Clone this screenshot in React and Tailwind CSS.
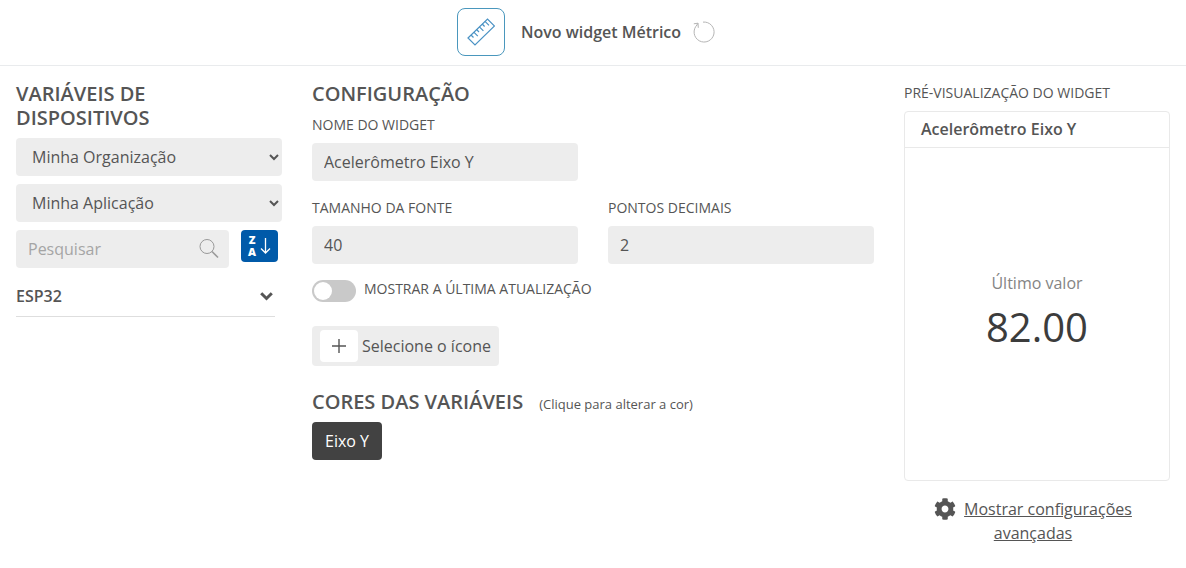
import { FaCog } from 'react-icons/fa';

const organizations = ['Minha Organização'];
const applications = ['Minha Aplicação'];
const devices = ['ESP32'];
const variables = [{ name: 'Eixo Y', color: '#424242' }];

export default function App() {
  return (
    <div className="min-h-screen bg-white font-['Open_Sans',sans-serif] text-base text-[#555555]">
      <WidgetHeader />
      <main className="grid grid-cols-4 gap-x-[30px] px-4 py-4">
        <DeviceVariables />
        <Configuration />
        <Preview />
      </main>
    </div>
  );
}

function WidgetHeader() {
  return (
    <header className="flex items-center justify-center gap-4 border-b border-[#e9ebed] pt-2 pr-[14px] pb-[9px]">
      <span className="flex size-12 items-center justify-center rounded-lg border border-[#4a97bd]">
        <RulerIcon />
      </span>
      <div className="flex items-center gap-3">
        <h1 className="font-semibold">Novo widget Métrico</h1>
        <button type="button" aria-label="Redefinir">
          <ResetIcon />
        </button>
      </div>
    </header>
  );
}

function SectionTitle({ children }) {
  return <h2 className="text-xl leading-6 font-semibold uppercase">{children}</h2>;
}

function DeviceVariables() {
  return (
    <section>
      <SectionTitle>
        Variáveis de
        <br />
        dispositivos
      </SectionTitle>
      <div className="mt-2 flex flex-col gap-2">
        <SelectBox label="Organização" options={organizations} />
        <SelectBox label="Aplicação" options={applications} />
        <div className="flex items-start gap-3 pr-1">
          <div className="relative min-w-0 flex-1">
            <input
              type="search"
              aria-label="Pesquisar"
              placeholder="Pesquisar"
              className="h-[38px] w-full rounded bg-[#ededed] pr-10 pl-3 placeholder:text-[#a5a5a5]"
            />
            <SearchIcon />
          </div>
          <button
            type="button"
            aria-label="Ordenar"
            className="flex h-8 w-[37px] items-center justify-center rounded bg-[#005aa9] text-white"
          >
            <SortIcon />
          </button>
        </div>
      </div>
      <ul className="mt-4 pr-[7px]">
        {devices.map((device) => (
          <li key={device} className="border-b border-[#dedede] pb-2">
            <button type="button" className="flex w-full items-center justify-between font-semibold">
              {device}
              <ChevronIcon />
            </button>
          </li>
        ))}
      </ul>
    </section>
  );
}

function SelectBox({ label, options }) {
  return (
    <select aria-label={label} className="h-[38px] w-full rounded bg-[#ededed] px-3">
      {options.map((option) => (
        <option key={option}>{option}</option>
      ))}
    </select>
  );
}

function TextField({ id, label, value }) {
  return (
    <div>
      <label htmlFor={id} className="block text-sm uppercase">
        {label}
      </label>
      <input id={id} defaultValue={value} className="mt-2 block h-[38px] w-full rounded bg-[#ededed] px-3" />
    </div>
  );
}

function Configuration() {
  return (
    <section className="col-span-2">
      <SectionTitle>Configuração</SectionTitle>
      <div className="mt-[9px] grid grid-cols-2 gap-x-[30px] gap-y-[17px]">
        <div className="col-span-2 grid grid-cols-2 gap-x-[30px]">
          <TextField id="name" label="Nome do widget" value="Acelerômetro Eixo Y" />
        </div>
        <TextField id="font-size" label="Tamanho da fonte" value="40" />
        <TextField id="decimals" label="Pontos decimais" value="2" />
      </div>
      <label className="mt-4 flex items-start gap-2 text-sm leading-[18px] uppercase">
        <input
          type="checkbox"
          className="h-[22px] w-11 appearance-none rounded-full bg-[#c9c9c9] p-[2px] before:block before:size-[18px] before:rounded-full before:bg-white checked:bg-[#005aa9] checked:before:ml-[22px]"
        />
        Mostrar a última atualização
      </label>
      <button type="button" className="mt-6 flex h-10 items-center gap-1 rounded bg-[#ededed] px-2">
        <span className="flex h-8 w-[38px] items-center justify-center rounded bg-white">
          <PlusIcon />
        </span>
        Selecione o ícone
      </button>
      <div className="mt-6 flex items-baseline gap-4">
        <SectionTitle>Cores das variáveis</SectionTitle>
        <span className="text-[13px] leading-5">(Clique para alterar a cor)</span>
      </div>
      <div className="mt-2 flex gap-2">
        {variables.map(({ name, color }) => (
          <button
            key={name}
            type="button"
            className="h-[38px] rounded px-[13px] font-medium text-white"
            style={{ backgroundColor: color }}
          >
            {name}
          </button>
        ))}
      </div>
    </section>
  );
}

function Preview() {
  return (
    <section>
      <h2 className="text-sm leading-[22px] uppercase">Pré-visualização do widget</h2>
      <article className="mt-[7px] rounded-sm border border-[#e9e9e9]">
        <h3 className="border-b border-[#e9e9e9] px-4 pt-[5px] pb-[6px] font-semibold">Acelerômetro Eixo Y</h3>
        <div className="flex h-[332px] flex-col items-center justify-center pt-[2px]">
          <p className="text-[#848484]">Último valor</p>
          <p className="text-[40px] leading-[64px] text-[#3c3c3c]">82.00</p>
        </div>
      </article>
      <p className="mt-4 pr-2 text-center">
        <FaCog className="mr-2 inline-block size-[22px] align-text-bottom" />
        <a href="#advanced" className="underline">
          Mostrar configurações avançadas
        </a>
      </p>
    </section>
  );
}

function RulerIcon() {
  return (
    <svg width="28" height="28" viewBox="0 0 28 28" fill="none" stroke="#4a92c4" strokeWidth="1.2">
      <path d="M1 20 20.5 1 27.5 8 8 27Z" />
      <path d="m4 17 2.5 2.5M6.8 14.2l4 4M9.6 11.5 12 14M12.4 8.8l4 4M15.2 6l2.4 2.5M18 3.4l4 4" />
    </svg>
  );
}

function ResetIcon() {
  return (
    <svg width="22" height="22" viewBox="0 0 22 22" fill="none" stroke="#b5b5b5" strokeWidth="1">
      <path d="M10 1.1A10 10 0 1 1 4.2 3.8" />
      <path d="M.8 2.8 5 2.2l.3 4.6M5 2.2 3.2 5" />
    </svg>
  );
}

function SearchIcon() {
  return (
    <svg
      className="pointer-events-none absolute top-[9px] right-[10px]"
      width="20"
      height="20"
      viewBox="0 0 20 20"
      fill="none"
      stroke="#999999"
    >
      <circle cx="8" cy="7.5" r="7" />
      <path d="m13 12.5 6 6" strokeWidth="1.6" />
    </svg>
  );
}

function SortIcon() {
  return (
    <>
      <span className="flex flex-col text-[11px] leading-3 font-extrabold">
        <span>Z</span>
        <span>A</span>
      </span>
      <svg className="ml-1" width="11" height="18" viewBox="0 0 11 18" fill="none" stroke="currentColor" strokeWidth="1.3">
        <path d="M5.5 1v15M1 11.5 5.5 16l4.5-4.5" />
      </svg>
    </>
  );
}

function ChevronIcon() {
  return (
    <svg className="mr-0.5" width="13" height="9" viewBox="0 0 13 9" fill="none" stroke="currentColor" strokeWidth="3">
      <path d="m1.2 1.2 5.3 5.3 5.3-5.3" />
    </svg>
  );
}

function PlusIcon() {
  return (
    <svg width="16" height="16" viewBox="0 0 16 16" fill="none" stroke="currentColor" strokeWidth="1.4">
      <path d="M8 1v14M1 8h14" />
    </svg>
  );
}
